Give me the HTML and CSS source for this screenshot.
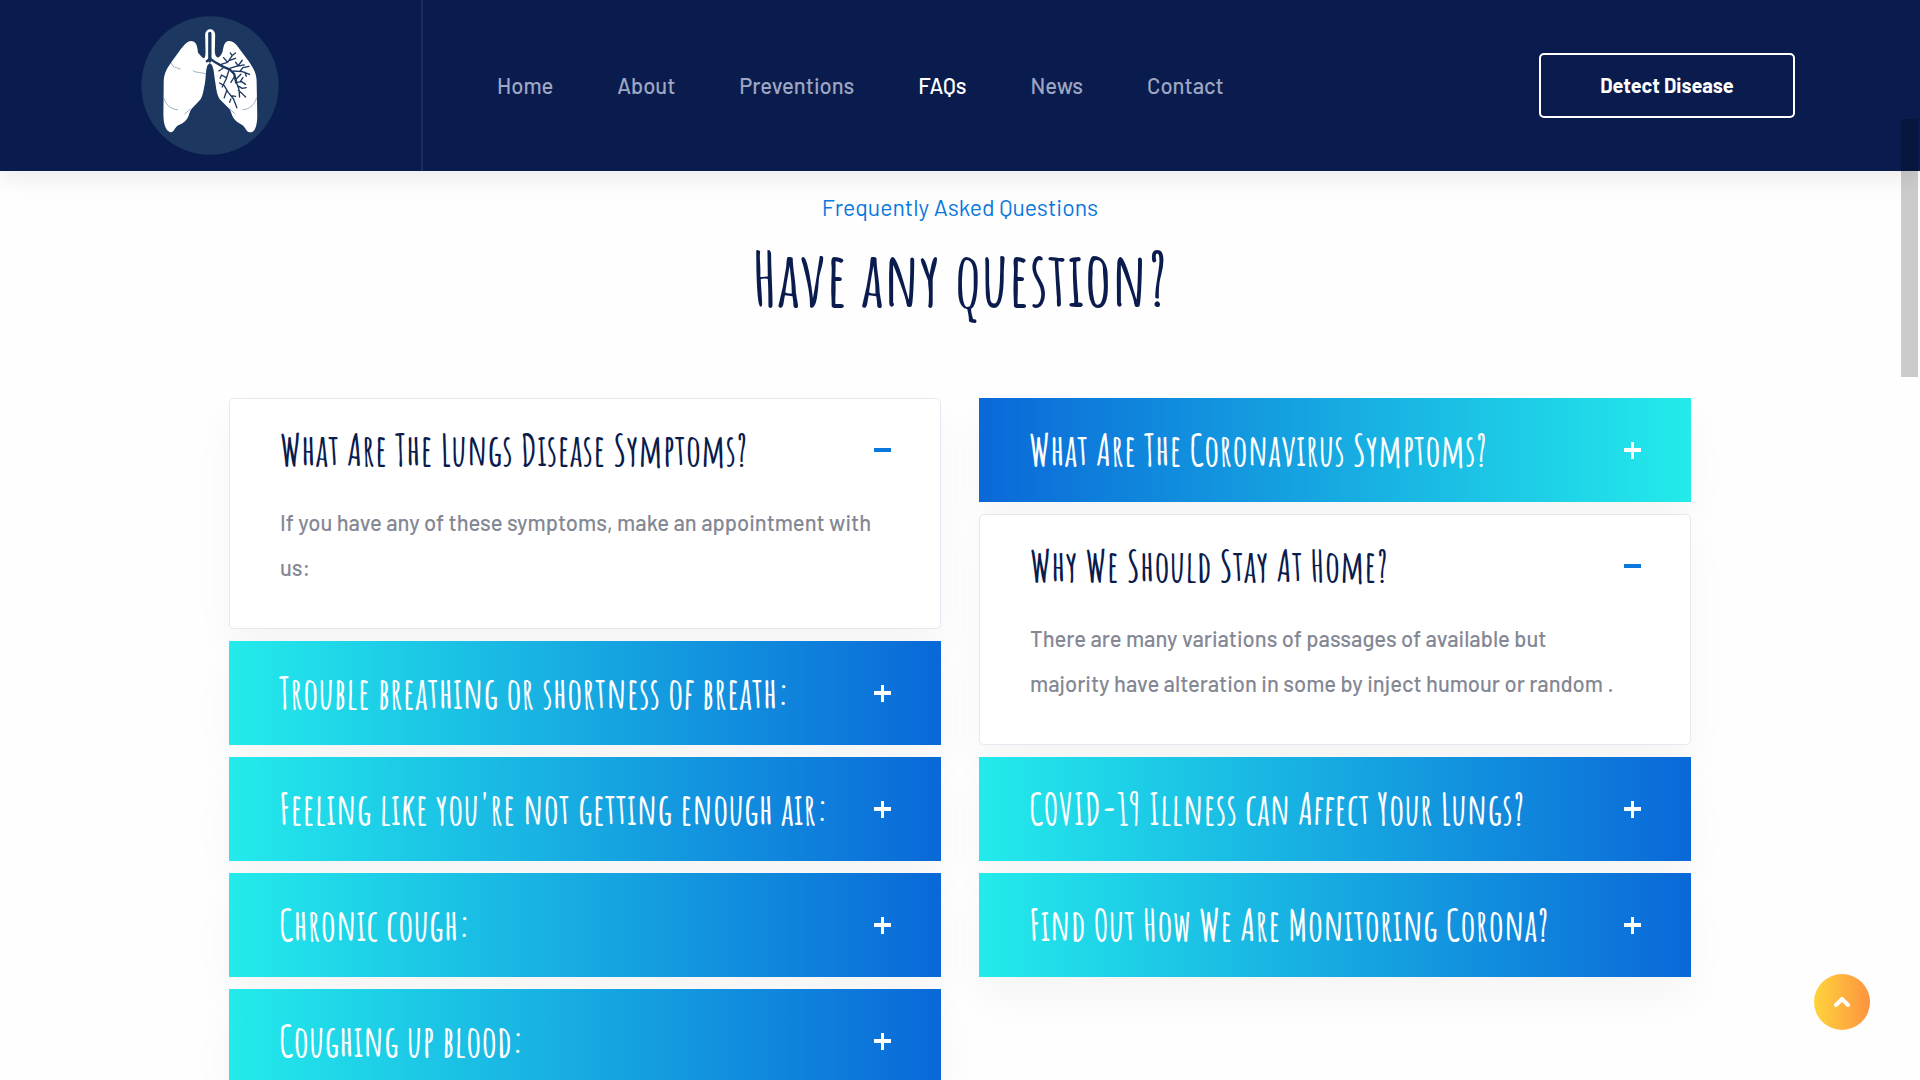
FILE: index.html
```html
<!DOCTYPE html>
<html lang="en">
<head>
<meta charset="utf-8">
<meta name="viewport" content="width=device-width, initial-scale=1">
<title>FAQs</title>
<link rel="stylesheet" href="styles.css">
</head>
<body>
<header class="header">
  <a class="logo" href="#" aria-label="Home page">
    <svg class="logo-mark" viewBox="65 48 413 415" aria-hidden="true">
      <ellipse cx="271.500" cy="255.500" rx="205.500" ry="207.500" fill="#1c3860"/>
      <path fill="#fff" d="M216 122C204 122 196 132 186 144L160 180C146 200 135 214 133 240L132 345C133 366 136 382 146 392C152 397 158 396 163 390C168 384 170 378 178 374C190 370 200 362 206 350C210 342 210 334 216 326L242 298C250 288 252 270 256 250C260 230 258 210 264 195L271 188L278 195C284 210 284 230 288 250C290 270 294 286 300 296L330 326C336 336 336 346 344 356C352 366 362 370 368 374C376 380 378 388 384 393C392 398 400 396 405 388C411 376 413 362 413 345L411 240C410 214 398 200 388 184L352 136C346 128 338 122 326 122C314 124 312 140 309 154C306 164 300 172 294 172C287 168 286 160 286 150L287 104C286 82 258 82 257 104L258 150C258 162 258 172 253 174C248 172 242 164 236 158C234 146 234 124 216 122Z"/>
      <path fill="none" stroke="#1c3860" stroke-width="10" stroke-linecap="round" d="M271 100V182"/>
      <path fill="none" stroke="#1c3860" stroke-width="7" stroke-linecap="round" stroke-linejoin="round" d="M262 183l10-8 14 10 24 14 20 8 14 14 6 26"/>
      <path fill="none" stroke="#1c3860" stroke-width="4" stroke-linecap="round" stroke-linejoin="round" d="M300 194l24-8 14-20M324 186l-12-14M330 180l18-6M338 166l-6-8M340 164l8-6M326 206l30-10 12-16M356 196l-8-10M350 198l24-4M340 212l28 2 22 8M362 212l8-10 18-4M376 216l4 12M328 210l-8 26-12 24M320 232l-14-8-4 10M310 204l-12 8M314 256l12 20 16 20 10 26M314 256l-14-8M322 270l-8 22M334 286l14 2M334 296l-4 10M350 246l8 20 2 24M350 246l16-2 12 8M362 244l8-12M354 256l14 8 12-2M356 270l14 12 8 8M350 236l14-14M344 230l-10 16"/>
      <path fill="none" stroke="#7187a2" stroke-width="2" d="M156 189c4 14 16 12 28 18M220 211c12 8 26 4 40 10M133 292c6 22 22 35 42 36M411 292c-6 22-22 35-42 36M195 341l18-15M348 341l-18-15"/>
    </svg>
  </a>
  <nav class="nav" aria-label="Main">
    <a href="#">Home</a>
    <a href="#">About</a>
    <a href="#">Preventions</a>
    <a class="is-active" href="#" aria-current="page">FAQs</a>
    <a href="#">News</a>
    <a href="#">Contact</a>
  </nav>
  <button class="detect" type="button">Detect Disease</button>
</header>
<main class="content">
  <div class="intro">
    <p class="eyebrow">Frequently Asked Questions</p>
    <h1 class="title">Have any question?</h1>
  </div>
  <div class="faq">
    <div class="column">
      <section class="item is-open">
        <h2 class="heading"><button class="toggle" type="button" aria-expanded="true">What Are The Lungs Disease Symptoms?<span class="sign"></span></button></h2>
        <p class="answer">If you have any of these symptoms, make an appointment with us:</p>
      </section>
      <section class="item">
        <h2 class="heading"><button class="toggle" type="button" aria-expanded="false">Trouble breathing or shortness of breath:<span class="sign"></span></button></h2>
      </section>
      <section class="item">
        <h2 class="heading"><button class="toggle" type="button" aria-expanded="false">Feeling like you're not getting enough air:<span class="sign"></span></button></h2>
      </section>
      <section class="item">
        <h2 class="heading"><button class="toggle" type="button" aria-expanded="false">Chronic cough:<span class="sign"></span></button></h2>
      </section>
      <section class="item">
        <h2 class="heading"><button class="toggle" type="button" aria-expanded="false">Coughing up blood:<span class="sign"></span></button></h2>
      </section>
    </div>
    <div class="column">
      <section class="item is-reversed">
        <h2 class="heading"><button class="toggle" type="button" aria-expanded="false">What Are The Coronavirus Symptoms?<span class="sign"></span></button></h2>
      </section>
      <section class="item is-open">
        <h2 class="heading"><button class="toggle" type="button" aria-expanded="true">Why We Should Stay At Home?<span class="sign"></span></button></h2>
        <p class="answer">There are many variations of passages of available but majority have alteration in some by inject humour or random .</p>
      </section>
      <section class="item">
        <h2 class="heading"><button class="toggle" type="button" aria-expanded="false">COVID-19 Illness can Affect Your Lungs?<span class="sign"></span></button></h2>
      </section>
      <section class="item">
        <h2 class="heading"><button class="toggle" type="button" aria-expanded="false">Find Out How We Are Monitoring Corona?<span class="sign"></span></button></h2>
      </section>
    </div>
  </div>
</main>
<div class="scroll-thumb" aria-hidden="true"></div>
<button class="to-top" type="button" aria-label="Back to top">
  <svg width="16" height="10" viewBox="0 0 16 10" aria-hidden="true"><path d="M2 8l6-6 6 6" fill="none" stroke="#fff" stroke-width="4" stroke-linecap="round"/></svg>
</button>
</body>
</html>
```
FILE: styles.css
```css
:root {
  --navy: #0a1b4d;
  --blue: #0a77dc;
  --body-font: Barlow, Roboto, "Liberation Sans", sans-serif;
  --display-font: "Amatic SC", "Liberation Sans Narrow", "Liberation Sans", sans-serif;
}

* { box-sizing: border-box; }

body {
  margin: 0;
  height: 100vh;
  display: flex;
  flex-direction: column;
  overflow: hidden;
  background: #fefefe;
  font-family: var(--body-font);
  font-size: 22px;
  font-weight: 500;
}

button { font: inherit; cursor: pointer; }

.header {
  position: relative;
  z-index: 1;
  flex: none;
  display: flex;
  align-items: stretch;
  padding-right: 125px;
  background: var(--navy);
  box-shadow: 0 8px 20px rgba(0, 0, 0, .07);
}

.logo {
  padding: 16px 142px 16px 141px;
  border-right: 2px solid #1c2c5b;
}

.logo-mark { display: block; width: 138px; height: 139px; }

.nav {
  flex: 1;
  display: flex;
  align-items: center;
  gap: 64px;
  padding: 0 0 2px 74px;
}

.nav a { color: #9da6c2; text-decoration: none; }
.nav .is-active { color: #fff; }

.detect {
  align-self: center;
  width: 256px;
  height: 65px;
  padding: 0 0 2px;
  border: 2px solid #fff;
  border-radius: 5px;
  background: transparent;
  color: #fff;
  font-size: 20px;
  font-weight: 700;
}

.content {
  flex: 1;
  min-height: 0;
  overflow-y: auto;
  scrollbar-width: none;
  padding: 19px 24px 0;
}

.intro { text-align: center; margin-bottom: 74px; }
.eyebrow { margin: 0; font-size: 23px; font-weight: 400; line-height: 34px; color: var(--blue); }

.title {
  margin: 8px 0 0;
  color: var(--navy);
  font-family: var(--display-font);
  font-size: 75px;
  font-weight: 700;
  line-height: 92px;
}

.faq {
  display: grid;
  grid-template-columns: 1fr 1fr;
  gap: 38px;
  max-width: 1462px;
  margin: 0 auto;
}

.column { display: flex; flex-direction: column; gap: 12px; }

.item {
  background: linear-gradient(90deg, #23ebeb, #0a68d8);
  box-shadow: 0 20px 40px rgba(0, 0, 0, .04);
  color: #fff;
}

.is-reversed { background: linear-gradient(90deg, #0a68d8, #23ebeb); }

.is-open {
  border: 1px solid #e7e7f2;
  border-radius: 5px;
  background: #fff;
  color: var(--navy);
}

.heading { margin: 0; font: 700 43px/40px var(--display-font); }

.toggle {
  display: flex;
  align-items: center;
  justify-content: space-between;
  width: 100%;
  padding: 32px 50px;
  border: 0;
  background: none;
  color: inherit;
  text-align: left;
  white-space: nowrap;
}

.is-open .toggle { padding: 31px 49px 30px 50px; }

.sign {
  flex: none;
  width: 17px;
  height: 17px;
  color: #fff;
  background:
    linear-gradient(currentColor, currentColor) center / 17px 4px no-repeat,
    linear-gradient(currentColor, currentColor) center / 3px 17px no-repeat;
}

.is-open .sign {
  color: var(--blue);
  background: linear-gradient(currentColor, currentColor) center / 17px 4px no-repeat;
}

.answer {
  margin: 0;
  padding: 0 65px 38px 50px;
  color: #848894;
  line-height: 45px;
}

.scroll-thumb {
  position: absolute;
  z-index: 2;
  top: 119px;
  right: 2px;
  width: 17px;
  height: 258px;
  background: rgba(0, 0, 0, .2);
}

.to-top {
  position: absolute;
  right: 50px;
  bottom: 50px;
  width: 56px;
  height: 56px;
  display: grid;
  place-items: center;
  padding: 0;
  border: 0;
  border-radius: 50%;
  background: linear-gradient(90deg, #ffd43d, #fd933e);
}
```
